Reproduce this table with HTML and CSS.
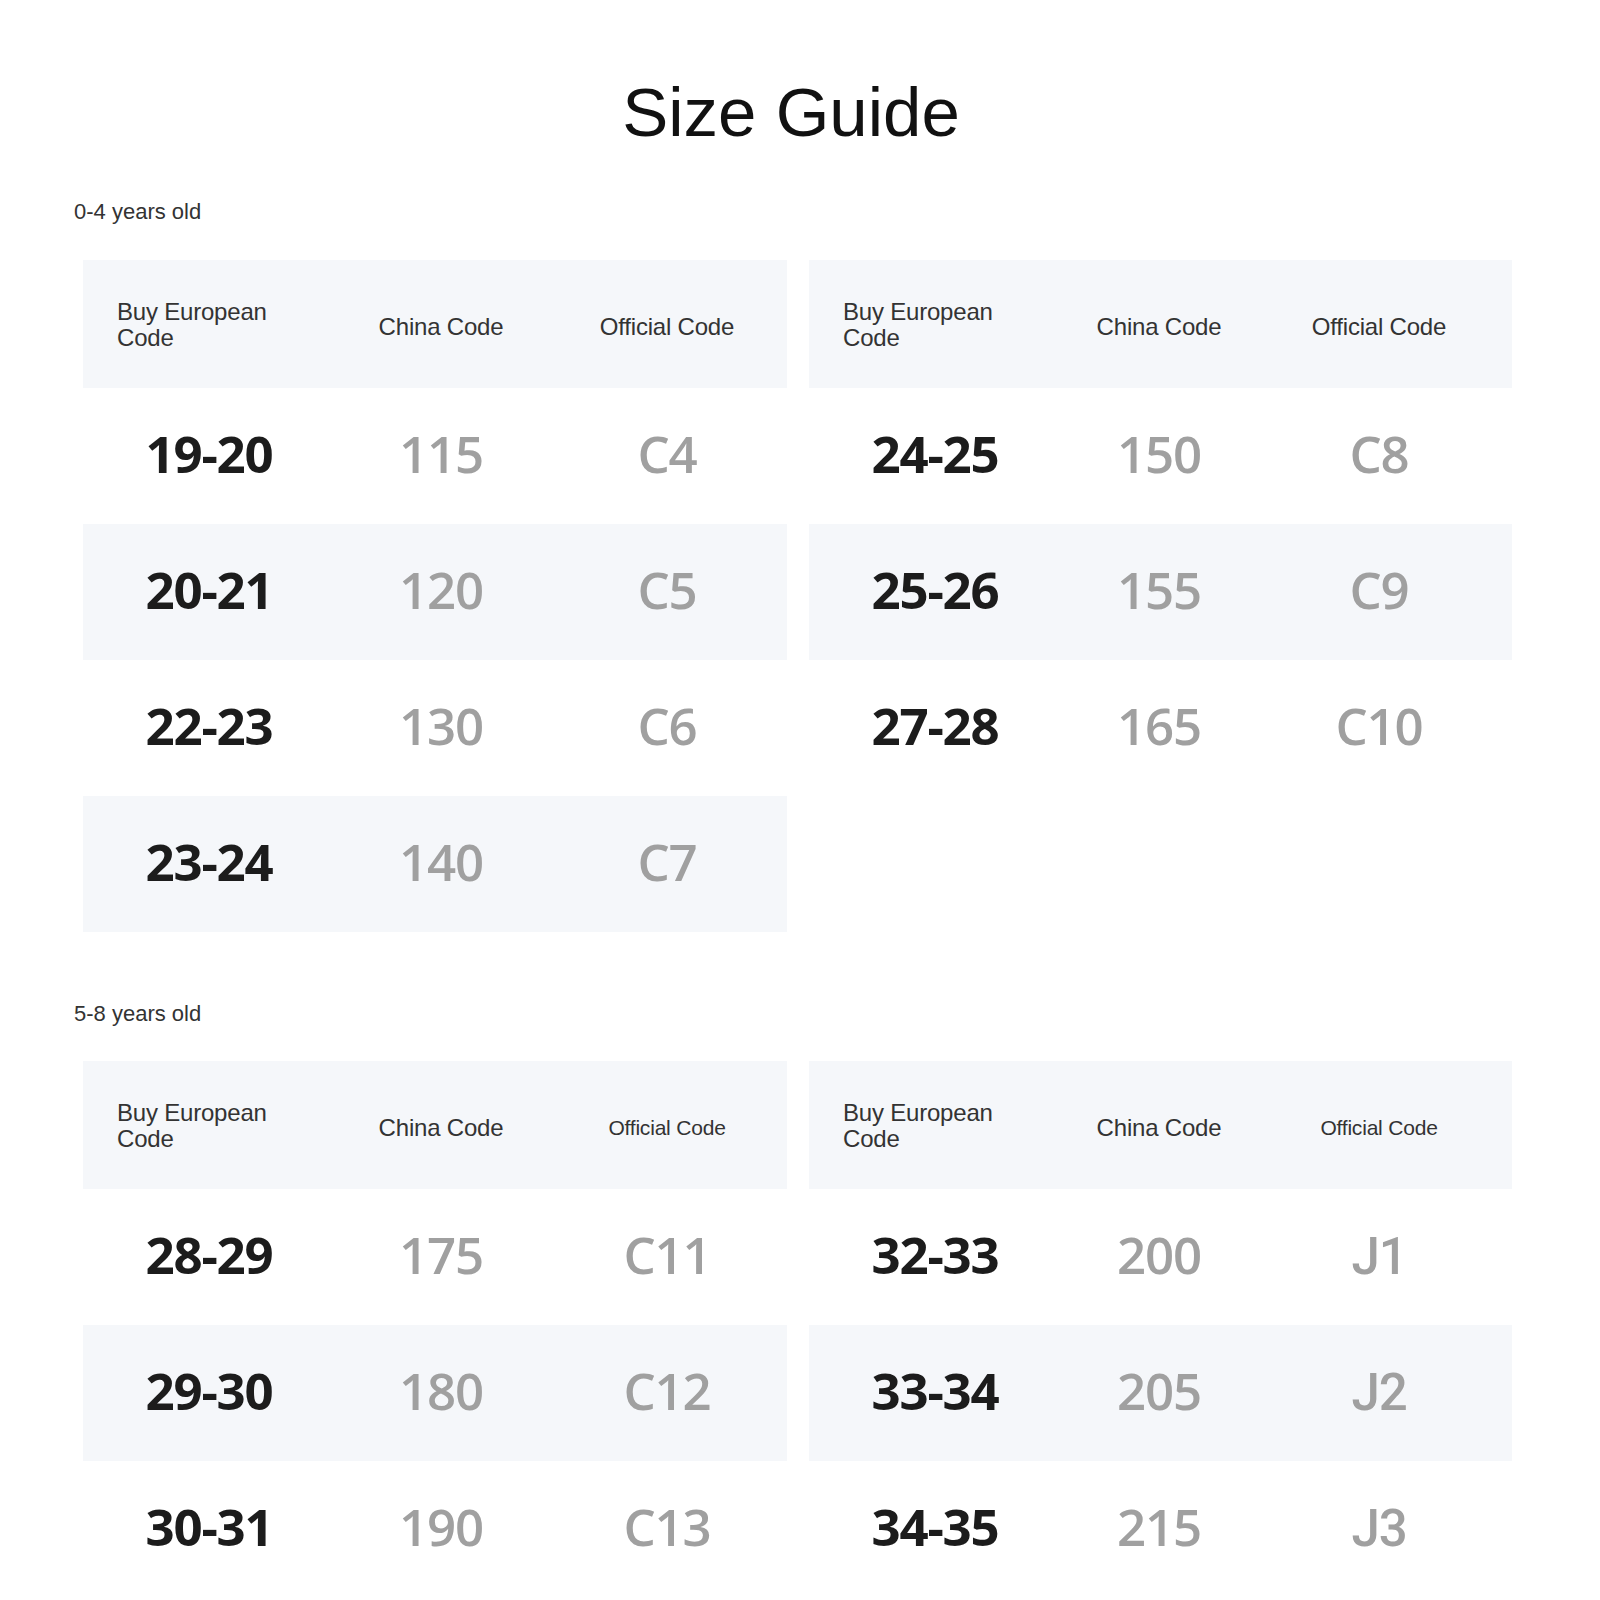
FILE: index.html
```html
<!DOCTYPE html>
<html lang="en">
<head>
<meta charset="utf-8">
<title>Size Guide</title>
<link rel="stylesheet" href="styles.css">
</head>
<body>
<main class="page">
  <h1 class="title">Size Guide</h1>

  <section class="group group-first">
    <p class="age">0-4 years old</p>
    <div class="tables">
      <div class="table table-left">
        <div class="row head">
          <div class="cell c1">Buy European<br>Code</div>
          <div class="cell c2">China Code</div>
          <div class="cell c3">Official Code</div>
        </div>
        <div class="row"><div class="cell c1 eu">19-20</div><div class="cell c2 num">115</div><div class="cell c3 num">C4</div></div>
        <div class="row alt"><div class="cell c1 eu">20-21</div><div class="cell c2 num">120</div><div class="cell c3 num">C5</div></div>
        <div class="row"><div class="cell c1 eu">22-23</div><div class="cell c2 num">130</div><div class="cell c3 num">C6</div></div>
        <div class="row alt"><div class="cell c1 eu">23-24</div><div class="cell c2 num">140</div><div class="cell c3 num">C7</div></div>
      </div>
      <div class="table table-right">
        <div class="row head">
          <div class="cell c1">Buy European<br>Code</div>
          <div class="cell c2">China Code</div>
          <div class="cell c3">Official Code</div>
        </div>
        <div class="row"><div class="cell c1 eu">24-25</div><div class="cell c2 num">150</div><div class="cell c3 num">C8</div></div>
        <div class="row alt"><div class="cell c1 eu">25-26</div><div class="cell c2 num">155</div><div class="cell c3 num">C9</div></div>
        <div class="row"><div class="cell c1 eu">27-28</div><div class="cell c2 num">165</div><div class="cell c3 num">C10</div></div>
      </div>
    </div>
  </section>

  <section class="group group-second">
    <p class="age">5-8 years old</p>
    <div class="tables">
      <div class="table table-left">
        <div class="row head">
          <div class="cell c1">Buy European<br>Code</div>
          <div class="cell c2">China Code</div>
          <div class="cell c3 small">Official Code</div>
        </div>
        <div class="row"><div class="cell c1 eu">28-29</div><div class="cell c2 num">175</div><div class="cell c3 num">C11</div></div>
        <div class="row alt"><div class="cell c1 eu">29-30</div><div class="cell c2 num">180</div><div class="cell c3 num">C12</div></div>
        <div class="row"><div class="cell c1 eu">30-31</div><div class="cell c2 num">190</div><div class="cell c3 num">C13</div></div>
      </div>
      <div class="table table-right">
        <div class="row head">
          <div class="cell c1">Buy European<br>Code</div>
          <div class="cell c2">China Code</div>
          <div class="cell c3 small">Official Code</div>
        </div>
        <div class="row"><div class="cell c1 eu">32-33</div><div class="cell c2 num">200</div><div class="cell c3 num jcode">J1</div></div>
        <div class="row alt"><div class="cell c1 eu">33-34</div><div class="cell c2 num">205</div><div class="cell c3 num jcode">J2</div></div>
        <div class="row"><div class="cell c1 eu">34-35</div><div class="cell c2 num">215</div><div class="cell c3 num jcode">J3</div></div>
      </div>
    </div>
  </section>
</main>
</body>
</html>
```
FILE: styles.css
```css
html, body {
  margin: 0;
  padding: 0;
  background: #ffffff;
}

body {
  font-family: "Liberation Sans", Arial, sans-serif;
  color: #222222;
}

.page {
  width: 1600px;
  padding-top: 74px;
  box-sizing: border-box;
}

.title {
  margin: 0;
  padding-right: 18px;
  text-align: center;
  font-family: "Liberation Sans", Arial, sans-serif;
  font-weight: 400;
  font-size: 69px;
  line-height: 78px;
  color: #111111;
}

.group {
  padding-left: 74px;
}

.group-first {
  margin-top: 48px;
}

.group-second {
  margin-top: 70px;
}

.age {
  margin: 0;
  font-size: 22px;
  line-height: 24px;
  color: #333333;
  letter-spacing: 0;
}

.tables {
  margin-top: 36px;
  margin-left: 9px;
  display: grid;
  grid-template-columns: 704px 703px;
  column-gap: 22px;
  align-items: start;
}

.group-second .tables {
  margin-top: 35px;
}

.table {
  display: flex;
  flex-direction: column;
}

.row {
  display: grid;
  height: 136px;
  align-items: center;
}

.table-left .row {
  grid-template-columns: 252px 212px 240px;
}

.table-right .row {
  grid-template-columns: 252px 196px 244px;
}

.row.head {
  height: 128px;
  background: #f5f7fa;
}

.row.alt {
  background: #f5f7fa;
}

.cell {
  text-align: center;
}

.head .cell {
  font-size: 24px;
  line-height: 26px;
  color: #333333;
  letter-spacing: -0.2px;
}

.head .c1 {
  text-align: left;
  padding-left: 34px;
  padding-top: 2px;
}

.head .c2,
.head .c3 {
  padding-top: 5px;
}

.head .c3.small {
  font-size: 21px;
}

.eu,
.num {
  font-family: "Open Sans", "Liberation Sans", sans-serif;
  font-size: 51px;
  line-height: 60px;
  letter-spacing: -1.2px;
  padding-bottom: 6px;
}

.eu {
  font-weight: 700;
  color: #1c1c1c;
}

.num {
  font-weight: 600;
  color: #a0a0a0;
}

.num.jcode {
  font-family: Roboto, "Open Sans", sans-serif;
  font-weight: 500;
  padding-bottom: 0;
}
```
